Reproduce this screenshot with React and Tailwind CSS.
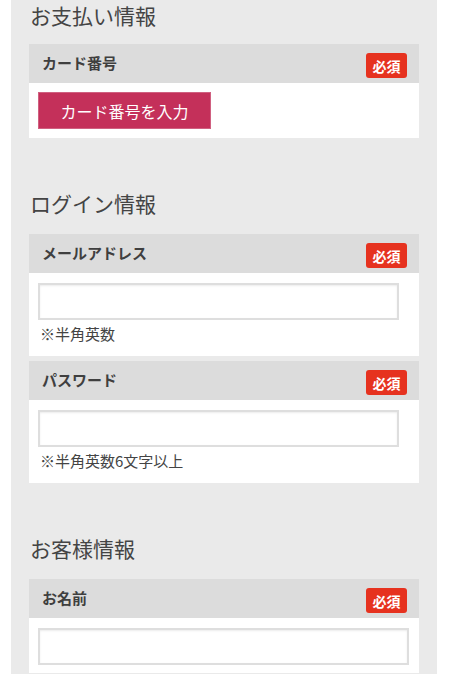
import React from 'react';

const font = {fontFamily: '"Noto Sans CJK JP", "Noto Sans", sans-serif'};

const Required = () => (
	<span className="mt-1 flex h-[25px] w-[41px] items-center justify-center rounded-[3px] bg-[#e6321f] text-[14px] font-bold leading-none text-white">
		必須
	</span>
);

const FieldHeader = ({label}) => (
	<div className="flex h-[39px] items-center justify-between bg-[#dcdcdc] pl-[13px] pr-[12px]">
		<span className="text-[15px] font-bold text-[#3f3f3f]">{label}</span>
		<Required />
	</div>
);

const TextField = ({note, wide}) => (
	<div className="bg-white pl-[9px] pt-[10px] pb-[8px]">
		<input
			type="text"
			className={`block h-[37px] ${wide ? 'w-[371px]' : 'w-[361px]'} border-2 border-[#dedede] bg-white shadow-[inset_0_1px_2px_rgba(0,0,0,0.08)] outline-none`}
		/>
		{note && (
			<p className="pl-[2px] text-[15px] leading-[28px] text-[#444]">{note}</p>
		)}
	</div>
);

const Section = ({title, children, first}) => (
	<section className={first ? '' : 'mt-[50px]'}>
		<h2
			className={`${first ? 'mb-[14px]' : 'mb-[16px]'} pl-[1px] text-[21px] leading-[30px] text-[#444]`}
		>
			{title}
		</h2>
		<div className="flex flex-col gap-[5px]">{children}</div>
	</section>
);

export default function App() {
	return (
		<div className="min-h-[674px] bg-white pl-[11px] pr-[12px]" style={font}>
			<div className="min-h-[674px] bg-[#eaeaea] px-[18px] pb-8">
				<Section title="お支払い情報" first>
					<div>
						<FieldHeader label="カード番号" />
						<div className="bg-white px-[9px] py-[9px]">
							<button className="h-[37px] w-[173px] border border-[#d06080] bg-[#c4305a] text-[16px] text-white">
								カード番号を入力
							</button>
						</div>
					</div>
				</Section>

				<Section title="ログイン情報">
					<div>
						<FieldHeader label="メールアドレス" />
						<TextField note="※半角英数" />
					</div>
					<div>
						<FieldHeader label="パスワード" />
						<TextField note="※半角英数6文字以上" />
					</div>
				</Section>

				<Section title="お客様情報">
					<div>
						<FieldHeader label="お名前" />
						<TextField wide />
					</div>
				</Section>
			</div>
		</div>
	);
}
